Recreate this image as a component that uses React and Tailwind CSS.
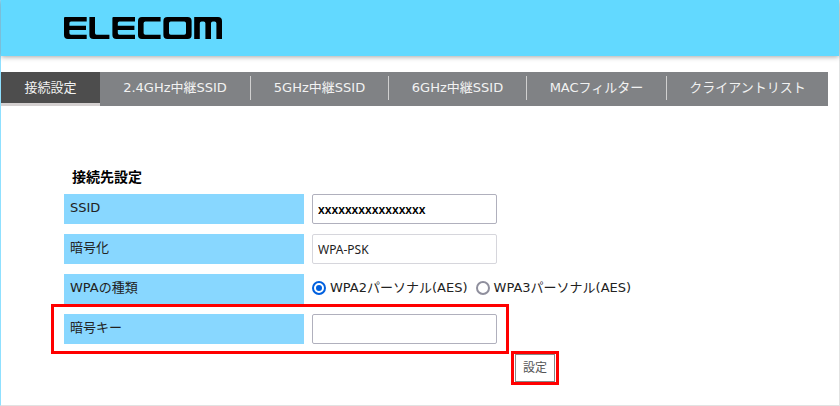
const TABS = [
  "接続設定",
  "2.4GHz中継SSID",
  "5GHz中継SSID",
  "6GHz中継SSID",
  "MACフィルター",
  "クライアントリスト",
];

const inputClass =
  "h-[30px] w-[185px] rounded-xs border bg-white px-[5px] font-['Noto_Sans','Noto_Sans_CJK_JP',sans-serif] text-[12px] outline-none";

export default function App() {
  return (
    <div className="min-h-screen border-r border-b border-l border-r-[#e2e2e2] border-b-[#e2e2e2] border-l-[#8fe0ff] bg-white font-['DejaVu_Sans','Noto_Sans_CJK_JP',sans-serif] text-[13px] leading-5 text-[#222]">
      <header className="flex h-14 items-center bg-[#62d9ff] pl-[63px] shadow-[0_1px_5px_rgba(0,0,0,0.35)]">
        <Logo />
      </header>

      <nav className="mt-4 mr-[11px] grid h-[34px] grid-cols-[99fr_151fr_138fr_138fr_140fr_161fr] bg-[#808285]">
        {TABS.map((tab, i) => (
          <Tab key={tab} label={tab} active={i === 0} last={i === TABS.length - 1} />
        ))}
      </nav>

      <form className="mt-[60px] ml-[50px]" onSubmit={(e) => e.preventDefault()}>
        <h1 className="pl-[21px] text-[14px] leading-[22px] font-bold text-black">接続先設定</h1>

        <div className="mt-[6px] flex flex-col gap-[10px] pl-[13px]">
          <Row label="SSID" htmlFor="ssid">
            <input
              id="ssid"
              type="text"
              defaultValue="xxxxxxxxxxxxxxxx"
              className={`${inputClass} border-[#b0b0bd] font-semibold text-black`}
            />
          </Row>
          <Row label="暗号化" htmlFor="encryption">
            <input
              id="encryption"
              type="text"
              readOnly
              defaultValue="WPA-PSK"
              className={`${inputClass} border-[#d6d6dc] text-[#222]`}
            />
          </Row>
          <div role="radiogroup" aria-labelledby="wpa-label">
            <Row label="WPAの種類" labelId="wpa-label">
              <div className="flex gap-2 pb-[2px]">
                <Radio value="wpa2" label="WPA2パーソナル(AES)" defaultChecked />
                <Radio value="wpa3" label="WPA3パーソナル(AES)" />
              </div>
            </Row>
          </div>
        </div>

        <div className="w-[458px] border-3 border-[#ff0000] py-[7px] pl-[10px]">
          <Row label="暗号キー" htmlFor="key">
            <input id="key" type="text" className={`${inputClass} border-[#b0b0bd] text-black`} />
          </Row>
        </div>

        <div className="-mt-[3px] ml-[460px] w-fit border-3 border-[#ff0000] px-px">
          <button
            type="submit"
            className="block h-7 w-10 border border-[#888] bg-white text-[12px] text-[#555]"
          >
            設定
          </button>
        </div>
      </form>
    </div>
  );
}

function Tab({ label, active, last }) {
  return (
    <a
      href="#"
      aria-current={active ? "page" : undefined}
      className={`flex items-center text-[#f2f2f2] ${
        active ? "border-b-3 border-[#d4d0d0] bg-[#4d4d4d]" : "pb-[2px]"
      }`}
    >
      <span className="flex-1 text-center">{label}</span>
      {!last && !active && <span className="h-6 w-px bg-[#d0d0d0]" />}
    </a>
  );
}

function Row({ label, htmlFor, labelId, children }) {
  const Label = htmlFor ? "label" : "span";
  return (
    <div className="flex h-[30px] items-center gap-2">
      <Label
        id={labelId}
        htmlFor={htmlFor}
        className="h-full w-60 bg-[#88d7ff] pl-[6px] leading-7"
      >
        {label}
      </Label>
      {children}
    </div>
  );
}

function Radio({ value, label, defaultChecked }) {
  return (
    <label className="flex items-center gap-1">
      <input
        type="radio"
        name="wpa"
        value={value}
        defaultChecked={defaultChecked}
        className="size-[14px] appearance-none rounded-full border-2 border-[#8f8f9d] bg-white checked:border-[#0060df] checked:bg-[#0060df] checked:bg-clip-content checked:p-[2px]"
      />
      {label}
    </label>
  );
}

function Logo() {
  return (
    <svg width="158" height="22" viewBox="0 0 158 22" role="img" aria-label="ELECOM">
      <path d="M1 0H22.7V4.4H7Q5.4 4.4 5.4 6V8.8H22V13H5.4V16Q5.4 17.8 7 17.8H22.7V22H4Q0 22 0 18V1Q0 0 1 0Z" />
      <path d="M25.4 0H31V16Q31 17.8 32.6 17.8H45.4V22H29.4Q25.4 22 25.4 18Z" />
      <path d="M49.4 0H71V4.4H55.4Q53.8 4.4 53.8 6V8.8H70.4V13H53.8V16Q53.8 17.8 55.4 17.8H71V22H52.4Q48.4 22 48.4 18V1Q48.4 0 49.4 0Z" />
      <path d="M78 0H96.6V4.4H81.4Q79.6 4.4 79.6 6.2V16Q79.6 17.8 81.4 17.8H96.6V22H78Q74 22 74 18V4Q74 0 78 0Z" />
      <path
        fillRule="evenodd"
        d="M103.4 0H123.6Q127.6 0 127.6 4V18Q127.6 22 123.6 22H103.4Q99.4 22 99.4 18V4Q99.4 0 103.4 0ZM106.8 4.4Q105 4.4 105 6.2V16Q105 17.8 106.8 17.8H120.2Q122 17.8 122 16V6.2Q122 4.4 120.2 4.4Z"
      />
      <path d="M130.2 0H154Q158 0 158 4V22H152.4V6.2Q152.4 4.4 150.6 4.4H148.8Q147 4.4 147 6.2V22H141.4V6.2Q141.4 4.4 139.6 4.4H137.6Q135.8 4.4 135.8 6.2V22H130.2Z" />
    </svg>
  );
}
